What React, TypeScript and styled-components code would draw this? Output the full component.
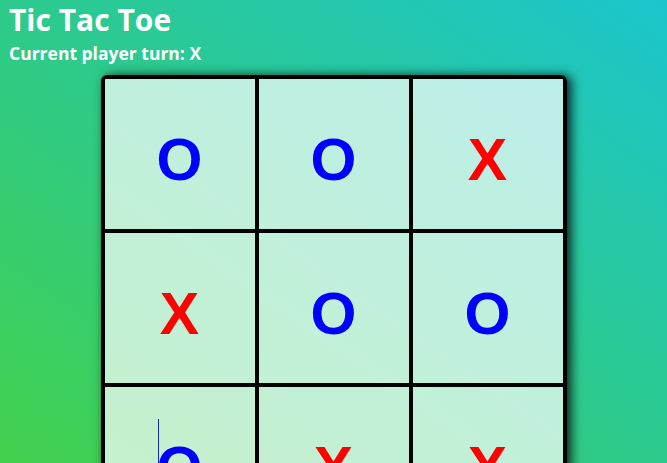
import React from "react";
import styled, { createGlobalStyle } from "styled-components";

const GlobalStyle = createGlobalStyle`
  html, body {
    margin: 0;
    padding: 0;
  }
  body {
    min-height: 100vh;
    background: linear-gradient(to top right, #42d04c 0%, #2dca8c 50%, #1bc5cc 100%);
    background-attachment: fixed;
    font-family: "Open Sans", "Noto Sans", sans-serif;
    color: #ffffff;
  }
`;

const Page = styled.div`
  padding: 0 8px;
  display: flex;
  flex-direction: column;
`;

const Title = styled.h1`
  margin: 4px 0 0 1px;
  font-size: 30px;
  line-height: 32px;
  font-weight: 700;
`;

const Status = styled.h3`
  margin: 6px 0 0 1px;
  font-size: 17.5px;
  line-height: 22px;
  font-weight: 700;
`;

const Board = styled.div`
  align-self: center;
  margin-top: 11px;
  display: grid;
  grid-template-columns: repeat(3, auto);
  border: 4px solid #000000;
  border-radius: 6px;
  box-shadow: 4px 1px 11px rgba(0, 0, 0, 0.85);
`;

const Cell = styled.div<{ $mark: string; $lastCol: boolean; $lastRow: boolean }>`
  position: relative;
  box-sizing: content-box;
  width: 150px;
  height: 138px;
  padding-top: 12px;
  display: flex;
  align-items: center;
  justify-content: center;
  border-right: ${(p) => (p.$lastCol ? "none" : "4px solid #000000")};
  border-bottom: ${(p) => (p.$lastRow ? "none" : "4px solid #000000")};
  background: rgba(255, 255, 255, 0.7);
  font-family: "Liberation Sans", Arial, sans-serif;
  font-weight: 700;
  font-size: 59px;
  color: ${(p) => (p.$mark === "X" ? "#ff0000" : "#0000ff")};
`;

const Caret = styled.span`
  position: absolute;
  left: 53px;
  top: 32px;
  width: 1px;
  height: 90px;
  background: #1a2aa8;
`;

const cells = ["O", "O", "X", "X", "O", "O", "O", "X", "X"];

export default function App() {
  return (
    <>
      <GlobalStyle />
      <Page>
        <Title>Tic Tac Toe</Title>
        <Status>Current player turn: X</Status>
        <Board>
          {cells.map((m, i) => (
            <Cell key={i} $mark={m} $lastCol={i % 3 === 2} $lastRow={i >= 6}>
              {i === 6 && <Caret />}
              {m}
            </Cell>
          ))}
        </Board>
      </Page>
    </>
  );
}
